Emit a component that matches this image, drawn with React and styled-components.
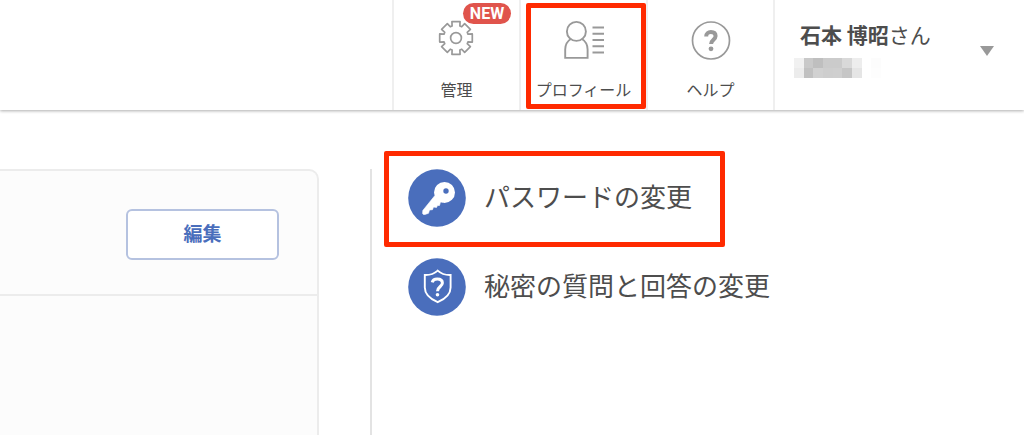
import React from "react";
import styled, { createGlobalStyle } from "styled-components";

const GlobalStyle = createGlobalStyle`
    * {
        box-sizing: border-box;
    }
    body {
        margin: 0;
        background: #fff;
        color: #4d4d4d;
        font-family: "Noto Sans CJK JP", sans-serif;
        overflow: hidden;
    }
    button {
        font-family: inherit;
        color: inherit;
        cursor: pointer;
    }
    svg {
        display: block;
        flex: none;
    }
`;

const Header = styled.header`
    display: flex;
    justify-content: flex-end;
    height: 110px;
    box-shadow: 0 1px 3px rgba(0, 0, 0, 0.32);
`;

const Nav = styled.nav`
    display: flex;
`;

const NavItem = styled.a`
    position: relative;
    display: flex;
    flex-direction: column;
    align-items: center;
    width: 127px;
    padding-top: 20px;
    border-left: 2px solid #efefef;
    color: inherit;
    text-decoration: none;
`;

const NavIcon = styled.span`
    display: flex;
    align-items: ${({ $align }) => $align || "center"};
    height: 40px;
`;

const NavLabel = styled.span`
    margin-top: 17px;
    font-size: 16px;
    line-height: 24px;
`;

const NewBadge = styled.span`
    position: absolute;
    top: 3px;
    right: 8px;
    width: 48px;
    border-radius: 11px;
    background: #e0544c;
    color: #fff;
    font: bold 16px/21px Roboto, sans-serif;
    text-align: center;
`;

const Highlight = styled.span`
    position: absolute;
    inset: ${({ $inset }) => $inset};
    border: 5px solid #ff2a00;
    border-radius: 2px;
    pointer-events: none;
`;

const UserMenu = styled.button`
    display: flex;
    align-items: flex-start;
    justify-content: space-between;
    width: 251px;
    padding: 19px 30px 0 19px;
    border: 0;
    border-left: 2px solid #efefef;
    background: none;
    text-align: left;
`;

const UserName = styled.span`
    display: block;
    padding-left: 6px;
    margin-bottom: 9px;
    font-size: 21px;
    line-height: 30px;
    white-space: nowrap;
`;

const Caret = styled.span`
    margin-top: 27px;
    border: 7px solid transparent;
    border-top: 10px solid #999;
    border-bottom: 0;
`;

const Main = styled.main`
    display: grid;
    grid-template-columns: minmax(0, 319px) minmax(0, 1fr);
    gap: 51px;
    padding-top: 59px;
`;

const Card = styled.section`
    min-height: 280px;
    border: 2px solid #ececec;
    border-left: 0;
    border-top-right-radius: 10px;
    background: #fcfcfc;
`;

const CardHead = styled.div`
    display: flex;
    justify-content: flex-end;
    padding: 38px 38px 34px 0;
    border-bottom: 2px solid #ececec;
`;

const EditButton = styled.button`
    width: 153px;
    height: 51px;
    padding: 0 0 4px;
    border: 2px solid #b5c2e0;
    border-radius: 6px;
    background: #fff;
    color: #4a6ebc;
    font-size: 19px;
    font-weight: bold;
`;

const Links = styled.ul`
    display: flex;
    flex-direction: column;
    gap: 31px;
    margin: 0;
    padding: 0 0 0 36px;
    border-left: 2px solid #e3e3e3;
    list-style: none;
`;

const SettingLink = styled.a`
    position: relative;
    display: flex;
    align-items: center;
    gap: 18px;
    width: fit-content;
    color: inherit;
    text-decoration: none;
`;

const LinkText = styled.span`
    padding-bottom: 5px;
    font-size: 26px;
    line-height: 36px;
    white-space: nowrap;
`;

const TOOTH_ANGLES = [
    [-18, 12.6],
    [-14, 16.8],
    [14, 16.8],
    [18, 12.6],
];

const gearPoints = [...Array(8)]
    .flatMap((_, i) =>
        TOOTH_ANGLES.map(([angle, radius]) => {
            const a = ((i * 45 + angle) * Math.PI) / 180;
            const x = 18 + radius * Math.sin(a);
            const y = 18 - radius * Math.cos(a);
            return `${x.toFixed(2)},${y.toFixed(2)}`;
        })
    )
    .join(" ");

function GearIcon() {
    return (
        <svg width="38" height="36" viewBox="0 0 38 36" fill="none" stroke="#999" strokeWidth="1.7" strokeLinejoin="round">
            <polygon points={gearPoints} />
            <circle cx="18" cy="18" r="5.4" />
        </svg>
    );
}

function ProfileIcon() {
    return (
        <svg width="40" height="40" viewBox="0 0 40 40" fill="none" stroke="#999" strokeWidth="1.9">
            <circle cx="12.4" cy="11.4" r="9.5" />
            <path d="M6.8 19C3 21.400 1.200 25 1.200 29.500v8.400h22.400v-8.400c0-4.500-1.800-8.100-5.600-10.500" />
            <path d="M28.500 7.500H40M28.500 13.700H40M28.500 20H40M28.500 26.200H40M28.500 32.500H40" />
        </svg>
    );
}

function HelpIcon() {
    return (
        <svg width="40" height="40" viewBox="0 0 40 40" fill="none" stroke="#999">
            <circle cx="20" cy="20.5" r="18.5" strokeWidth="1.7" />
            <path d="M15.200 16.500c0-2.900 2-4.400 4.700-4.400 2.900 0 4.700 1.500 4.700 4 0 3.600-4.500 3.800-4.500 7.900" strokeWidth="4" />
            <circle cx="20" cy="28.800" r="2.400" fill="#999" stroke="none" />
        </svg>
    );
}

function KeyIcon() {
    return (
        <svg width="58" height="58" viewBox="0 0 58 58" fill="#fff">
            <circle cx="29" cy="29" r="28.8" fill="#4a6ebc" />
            <circle cx="36.5" cy="23.4" r="10.5" />
            <path
                d="M26.500 27 14.800 41.500 14.600 44.500Q15 46 17 45.400L20.500 44.300 21.500 41 24.500 40.700 25.500 38 28.500 38.500 29.500 36.500 31.500 36.500 32.500 33 35 33Z"
                stroke="#fff"
                strokeWidth="0.6"
                strokeLinejoin="round"
            />
            <circle cx="38" cy="22" r="2.700" fill="#4a6ebc" />
        </svg>
    );
}

function ShieldIcon() {
    return (
        <svg width="58" height="58" viewBox="0 0 58 58" fill="none" stroke="#fff">
            <circle cx="29" cy="29" r="28.8" fill="#4a6ebc" stroke="none" />
            <path
                d="M29.700 12.600C26.500 15.500 22 17.200 16.800 17v12.500c0 7 5.500 11.500 12.900 14.700 7.400-3.200 12.900-7.700 12.900-14.700V17c-5.200.2-9.700-1.500-12.900-4.400Z"
                strokeWidth="1.9"
            />
            <path d="M24.200 24.400c.6-2.200 2.400-3.300 5-3.300 3.200 0 5.200 1.500 5.200 4 0 3.400-4.900 3.600-4.900 8.200" strokeWidth="3" />
            <circle cx="29.5" cy="36.800" r="1.800" fill="#fff" stroke="none" />
        </svg>
    );
}

// grey value of each tile in the masked account id
const MASK_TILES = [
    ["#f1f1f1", "#c9c9c9", "#bfbfbf", "#cbcbcb", "#cbcbcb", "#d9d9d9", "#ededed", "#fff", "#fcfcfc"],
    ["#ececec", "#c1c1c1", "#d1d1d1", "#cecece", "#cfcfcf", "#c6c6c6", "#e5e5e5", "#fff", "#fdfdfd"],
];

function MaskedId() {
    return (
        <svg width="87" height="20" viewBox="0 0 90 20" preserveAspectRatio="none" shapeRendering="crispEdges" aria-hidden="true">
            {MASK_TILES.map((row, y) =>
                row.map((fill, x) => (
                    <rect key={`${x}-${y}`} x={x * 10} y={y * 10} width="10" height="10" fill={fill} />
                ))
            )}
        </svg>
    );
}

function App() {
    return (
        <>
            <GlobalStyle />
            <Header>
                <Nav>
                    <NavItem href="#admin">
                        <NavIcon $align="flex-start">
                            <GearIcon />
                        </NavIcon>
                        <NavLabel>管理</NavLabel>
                        <NewBadge>NEW</NewBadge>
                    </NavItem>
                    <NavItem href="#profile">
                        <NavIcon>
                            <ProfileIcon />
                        </NavIcon>
                        <NavLabel>プロフィール</NavLabel>
                        <Highlight $inset="3px 0 1px 5px" />
                    </NavItem>
                    <NavItem href="#help">
                        <NavIcon>
                            <HelpIcon />
                        </NavIcon>
                        <NavLabel>ヘルプ</NavLabel>
                    </NavItem>
                </Nav>
                <UserMenu type="button">
                    <span>
                        <UserName>
                            <b>石本 博昭</b>さん
                        </UserName>
                        <MaskedId />
                    </span>
                    <Caret />
                </UserMenu>
            </Header>
            <Main>
                <Card>
                    <CardHead>
                        <EditButton type="button">編集</EditButton>
                    </CardHead>
                </Card>
                <Links>
                    <li>
                        <SettingLink href="#password">
                            <KeyIcon />
                            <LinkText>パスワードの変更</LinkText>
                            <Highlight $inset="-18px -33px -20px -24px" />
                        </SettingLink>
                    </li>
                    <li>
                        <SettingLink href="#question">
                            <ShieldIcon />
                            <LinkText>秘密の質問と回答の変更</LinkText>
                        </SettingLink>
                    </li>
                </Links>
            </Main>
        </>
    );
}

export default App;
